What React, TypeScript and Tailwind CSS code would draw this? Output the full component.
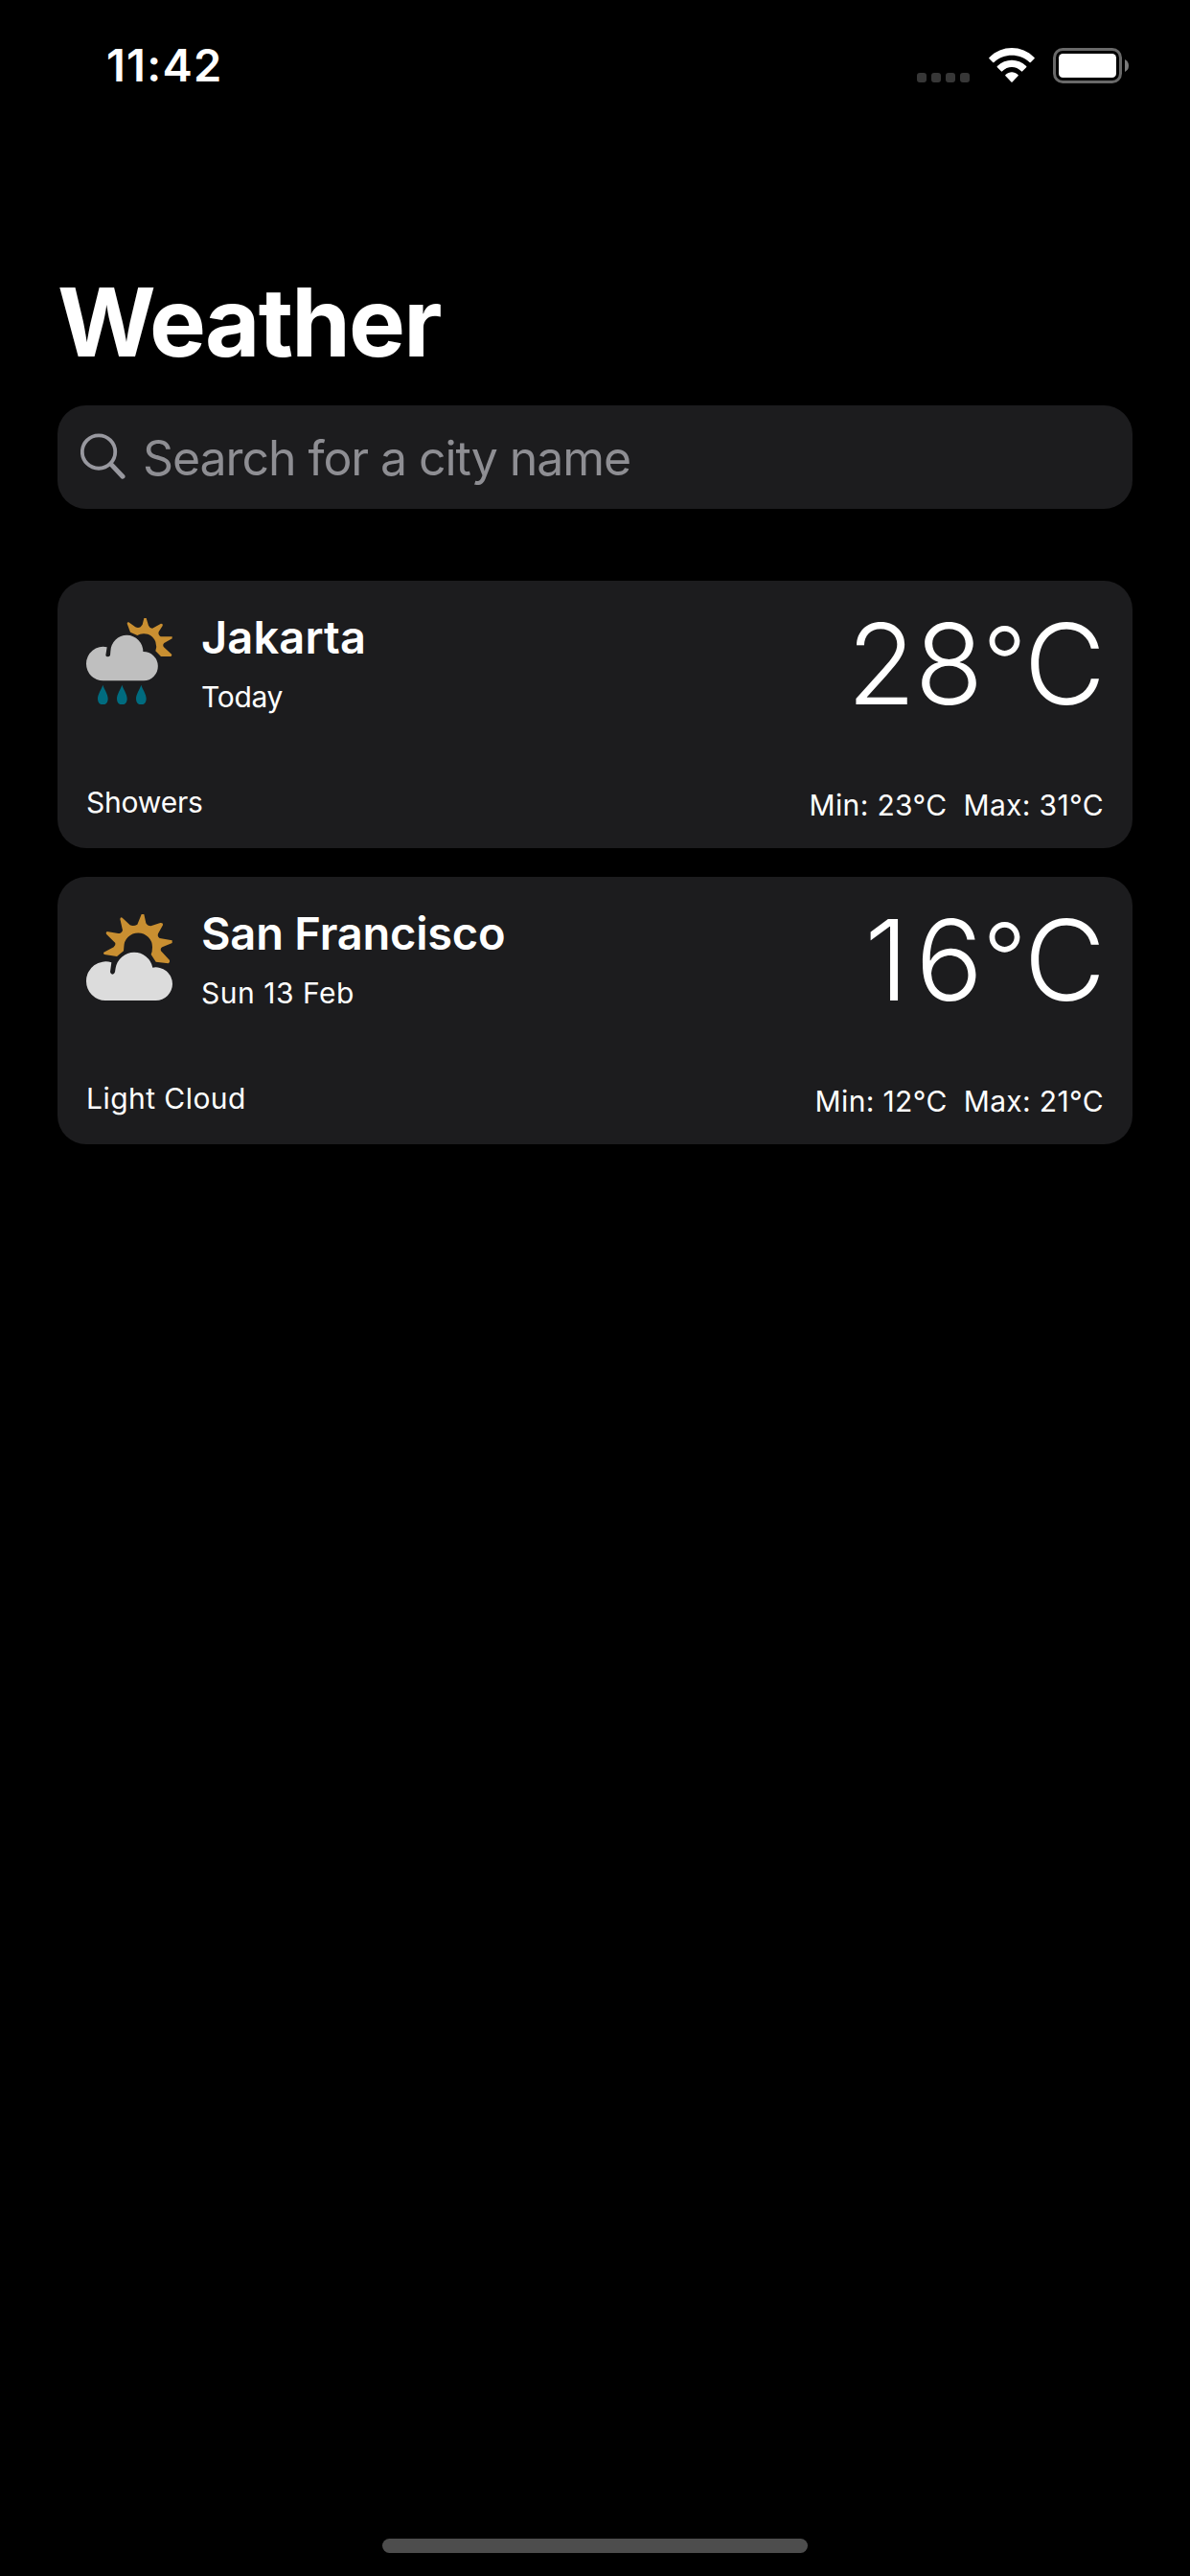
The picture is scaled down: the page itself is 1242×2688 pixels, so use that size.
import type { ReactNode } from "react";

function ShowersIcon() {
  return (
    <svg viewBox="30 45 270 270" className="size-[90px] shrink-0" aria-hidden="true">
      <path
        fill="#c98f31"
        d="M158 62Q158 56 163 58L184 73Q192 77 200 73L206 65L211 45H218L225 68Q229 77 237 77L264 62Q271 62 269 69L257 88Q254 97 263 103H299V109L274 123Q268 129 273 136L298 159Q298 164 295 165H264L247 148Q252 134 247 119C241 103 226 93 209 94Q198 95 190 99L168 89Z"
      />
      <path
        fill="#bfbfbf"
        d="M95 136L91 161Q92 166 97 166Q103 166 105 161L106 149A51 51 0 0 1 208 150A45.500 45.500 0 0 1 210 241H83A53 53 0 0 1 30 188A53 53 0 0 1 95 136Z"
      />
      {[82, 142, 202].map((x) => (
        <path
          key={x}
          transform={`translate(${x} 0)`}
          fill="#006b7f"
          d="M0 254C4 268 16 282 16 298C16 310 9 316 0 316C-9 316 -16 310 -16 298C-16 282 -4 268 0 254Z"
        />
      ))}
    </svg>
  );
}

function LightCloudIcon() {
  return (
    <svg viewBox="30 42 270 270" className="size-[90px] shrink-0" aria-hidden="true">
      <path
        fill="#c98f31"
        d="M147 157L126 174L87 168Q82 165 85 161L116 145Q123 140 121 132L93 104Q90 99 95 96L130 102Q141 102 144 92L136 57Q137 50 143 53L167 76Q178 81 190 74L203 42H211L217 70Q222 79 232 79L262 69Q271 68 270 76L255 103Q252 112 260 117L299 124V132L268 145Q261 149 264 157L291 186Q293 194 287 196L248 191L233 168Q237 160 237 145A44 44 0 0 0 148 145Z"
      />
      <path
        fill="#dcdcdc"
        d="M109 193L105 223Q107 230 112 230Q118 230 120 223L122 210A59 59 0 0 1 238 209A52.500 52.500 0 0 1 300 260A52.500 52.500 0 0 1 248 312H90A60.500 60.500 0 0 1 30 251A60.500 60.500 0 0 1 109 193Z"
      />
    </svg>
  );
}

function StatusBar() {
  return (
    <div className="flex h-[136px] items-center justify-between pl-[111px] pr-16">
      <span className="text-[47px] leading-[60px] font-semibold tracking-[1.240px]">11:42</span>
      <div className="flex h-[37px] items-end">
        <div className="mr-5 mb-px flex gap-[5px]">
          {[0, 1, 2, 3].map((i) => (
            <span key={i} className="size-[10px] rounded-[3px] bg-[#373737]" />
          ))}
        </div>
        <svg viewBox="275 57 143 108" className="mr-[19px] mb-px h-9 w-12" fill="#fff" aria-hidden="true">
          <path d="M276 87C315 47 378 47 417 87Q419 89 417 91L406 102Q404 104 402 102C371 73 322 73 291 102Q289 104 287 102L276 91Q274 89 276 87Z" />
          <path d="M301 114C327 89 366 89 392 114Q394 116 392 118L380 130Q378 132 376 130C360 113 333 113 317 130Q315 132 313 130L301 118Q299 116 301 114Z" />
          <path d="M327 141C339 130 354 130 366 141Q368 143 366 145L349 163Q346.500 166 344 163L327 145Q325 143 327 141Z" />
        </svg>
        <svg viewBox="477 57 237 111" className="h-[37px] w-[79px]" aria-hidden="true">
          <rect x="481.500" y="61.500" width="207" height="102" rx="26" fill="none" stroke="#696969" strokeWidth="9" />
          <rect x="495" y="75" width="180" height="75" rx="13" fill="#fff" />
          <path d="M702 93Q714 99 714 112.500Q714 126 702 132Z" fill="#7b7b7b" />
        </svg>
      </div>
    </div>
  );
}

function Degree() {
  return <span className="align-[9px] text-[100px] leading-none font-[340] tracking-[-2.500px]">°</span>;
}

interface ForecastProps {
  city: string;
  day: string;
  condition: string;
  temp: ReactNode;
  min: string;
  max: string;
  icon: ReactNode;
  citySpacing: string;
  daySpacing: string;
  conditionSpacing: string;
}

function ForecastCard(p: ForecastProps) {
  return (
    <article className="flex h-[279px] flex-col justify-between rounded-[30px] bg-[#1c1c1e] px-[30px] pb-[27px]">
      <div className="flex items-start">
        <div className="mt-[39px]">{p.icon}</div>
        <div className="mt-[29px] ml-[30px]">
          <h2 className={`text-[47px] leading-[60px] font-semibold ${p.citySpacing}`}>{p.city}</h2>
          <p className={`mt-[14px] text-[30px] leading-9 ${p.daySpacing}`}>{p.day}</p>
        </div>
        <div className="mt-[27px] -mr-[2px] ml-auto h-[120px] text-[117px] leading-[120px] font-[295]">{p.temp}</div>
      </div>
      <div className="flex justify-between text-[30px] leading-9">
        <p className={`-mt-[3px] ${p.conditionSpacing}`}>{p.condition}</p>
        <div className="flex gap-[17px] tracking-[0.350px]">
          <span>Min: {p.min}</span>
          <span>Max: {p.max}</span>
        </div>
      </div>
    </article>
  );
}

export default function App() {
  return (
    <div className="flex min-h-[2688px] w-[1242px] flex-col bg-black font-['Inter',sans-serif] text-white">
      <StatusBar />
      <main className="flex flex-1 flex-col px-[60px]">
        <h1 className="mt-[140px] text-[99px] leading-[120px] font-bold tracking-[-1.850px]">Weather</h1>
        <div className="mt-[27px] flex h-[108px] items-center rounded-[30px] bg-[#1c1c1e] pl-6">
          <svg viewBox="132 547 142 144" className="mb-[3px] h-12 w-[47px] shrink-0" fill="none" stroke="#98989f" aria-hidden="true">
            <circle cx="189.500" cy="605.500" r="52" strokeWidth="11.500" />
            <path d="M229 645L265 683" strokeWidth="15" strokeLinecap="round" />
          </svg>
          <span className="mt-[2px] ml-[18px] text-[50px] leading-[60px] tracking-[-1.080px] text-[#8e8e93]">
            Search for a city name
          </span>
        </div>
        <section className="mt-[75px] flex flex-col gap-[30px]">
          <ForecastCard
            city="Jakarta"
            day="Today"
            condition="Showers"
            temp={
              <>
                <span className="tracking-[-1px]">2</span>
                <span className="tracking-[-0.500px]">8</span>
                <Degree />C
              </>
            }
            min="23°C"
            max="31°C"
            icon={<ShowersIcon />}
            citySpacing="tracking-[0.120px]"
            daySpacing="tracking-[-0.300px]"
            conditionSpacing="tracking-[-0.200px]"
          />
          <ForecastCard
            city="San Francisco"
            day="Sun 13 Feb"
            condition="Light Cloud"
            temp={
              <>
                <span className="tracking-[7px]">1</span>
                <span>6</span>
                <Degree />C
              </>
            }
            min="12°C"
            max="21°C"
            icon={<LightCloudIcon />}
            citySpacing="tracking-[-0.210px]"
            daySpacing="tracking-[0.520px]"
            conditionSpacing="tracking-[0.450px]"
          />
        </section>
      </main>
      <div className="mx-auto mb-6 h-[15px] w-[444px] rounded-full bg-[#4d4d4d]" />
    </div>
  );
}
